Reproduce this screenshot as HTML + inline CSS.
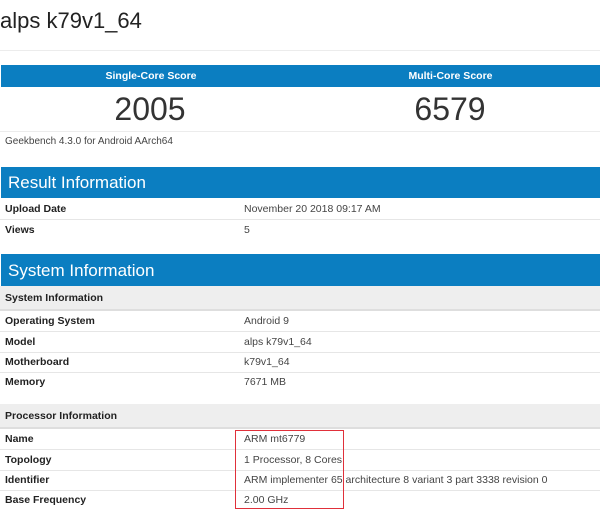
<!DOCTYPE html>
<html><head><style>
body{margin:0;width:600px;height:515px;background:#fff;font-family:"Liberation Sans",Arial,sans-serif;color:#333;position:relative;overflow:hidden}
.a{position:absolute}
.blue{background:#0b7ec1;color:#fff}
.row{position:absolute;left:0;width:600px;height:20px;border-bottom:1px solid #e6e6e6;font-size:10.5px}
.row b{position:absolute;left:5px;top:4px;color:#222}
.row span{position:absolute;left:244px;top:4px;color:#444}
.gray{position:absolute;left:0;width:600px;background:#eeeeee;border-bottom:2px solid #dedede;font-size:10.5px;font-weight:bold;color:#222}
</style></head><body>
<div class="a" style="left:0;top:8px;font-size:22px;color:#222">alps k79v1_64</div>
<div class="a" style="left:0;top:50px;width:600px;height:1px;background:#ececec"></div>
<div class="a blue" style="left:1px;top:65px;width:599px;height:22px;font-size:10.5px;font-weight:bold">
<div class="a" style="left:0;width:300px;text-align:center;top:5px">Single-Core Score</div>
<div class="a" style="left:300px;width:299px;text-align:center;top:5px">Multi-Core Score</div></div>
<div class="a" style="left:0;width:300px;text-align:center;top:91px;font-size:32px;color:#333">2005</div>
<div class="a" style="left:300px;width:300px;text-align:center;top:91px;font-size:32px;color:#333">6579</div>
<div class="a" style="left:0;top:131px;width:600px;height:1px;background:#ececec"></div>
<div class="a" style="left:5px;top:136px;font-size:10px;color:#444">Geekbench 4.3.0 for Android AArch64</div>
<div class="a blue" style="left:1px;top:167px;width:599px;height:31px;font-size:17px"><div class="a" style="left:7px;top:6px">Result Information</div></div>
<div class="row" style="top:199px"><b>Upload Date</b><span>November 20 2018 09:17 AM</span></div>
<div class="row" style="top:220px;border:0"><b>Views</b><span>5</span></div>
<div class="a blue" style="left:1px;top:254px;width:599px;height:32px;font-size:17px"><div class="a" style="left:7px;top:7px">System Information</div></div>
<div class="gray" style="top:286px;height:23px"><div class="a" style="left:5px;top:6px">System Information</div></div>
<div class="row" style="top:311px"><b>Operating System</b><span>Android 9</span></div>
<div class="row" style="top:332px"><b>Model</b><span>alps k79v1_64</span></div>
<div class="row" style="top:352px"><b>Motherboard</b><span>k79v1_64</span></div>
<div class="row" style="top:372px;border:0"><b>Memory</b><span>7671 MB</span></div>
<div class="gray" style="top:404px;height:23px"><div class="a" style="left:5px;top:6px">Processor Information</div></div>
<div class="row" style="top:429px"><b>Name</b><span>ARM mt6779</span></div>
<div class="row" style="top:450px"><b>Topology</b><span>1 Processor, 8 Cores</span></div>
<div class="row" style="top:470px"><b>Identifier</b><span>ARM implementer 65 architecture 8 variant 3 part 3338 revision 0</span></div>
<div class="row" style="top:490px;border:0"><b>Base Frequency</b><span>2.00 GHz</span></div>
<div class="a" style="left:235px;top:430px;width:107px;height:77px;border:1.5px solid #e0303a"></div>
</body></html>
